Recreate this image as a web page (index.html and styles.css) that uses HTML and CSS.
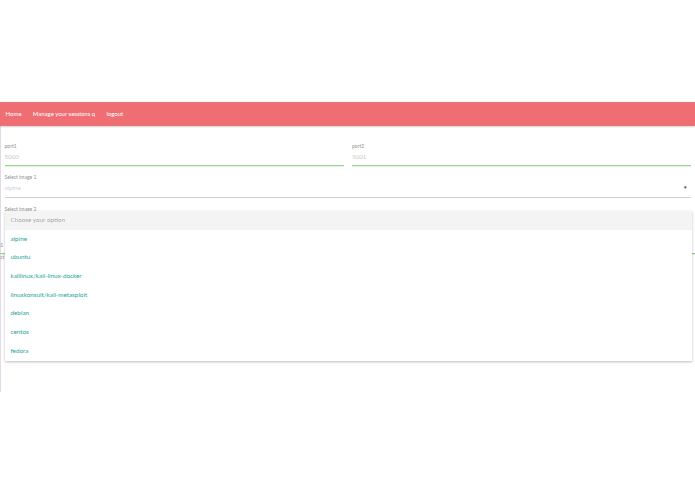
FILE: index.html
```html
<!DOCTYPE html>
<html>
<head>
<meta charset="utf-8">
<link rel="stylesheet" href="styles.css">
</head>
<body>
<div class="top-space"></div>
<div class="page">
  <nav class="nav">
    <a class="nav-link" href="#">Home</a>
    <a class="nav-link" href="#">Manage your sessions q</a>
    <a class="nav-link" href="#">logout</a>
  </nav>
  <div class="form">
    <div class="row">
      <div class="col">
        <div class="field">
          <div class="label">port1</div>
          <div class="input valid">5000</div>
        </div>
      </div>
      <div class="col">
        <div class="field">
          <div class="label">port2</div>
          <div class="input valid">5001</div>
        </div>
      </div>
    </div>
    <div class="row">
      <div class="col full">
        <div class="field select-field">
          <div class="label">Select image 1</div>
          <div class="input select">alpine<span class="caret">&#9662;</span></div>
        </div>
      </div>
    </div>
    <div class="row">
      <div class="col full">
        <div class="field select-field open">
          <div class="label">Select image 2</div>
          <div class="input select">alpine<span class="caret">&#9662;</span></div>
          <ul class="dropdown">
            <li class="opt disabled">Choose your option</li>
            <li class="opt">alpine</li>
            <li class="opt">ubuntu</li>
            <li class="opt">kalilinux/kali-linux-docker</li>
            <li class="opt">linuxkonsult/kali-metasploit</li>
            <li class="opt">debian</li>
            <li class="opt">centos</li>
            <li class="opt">fedora</li>
          </ul>
        </div>
      </div>
    </div>
    <div class="hidden-form">
      <div class="label">port1</div>
      <div class="input valid thin"></div>
      <div class="label">Select image 1</div>
    </div>
  </div>
</div>
</body>
</html>
```
FILE: styles.css
```css
* { box-sizing: border-box; }
html, body { margin: 0; padding: 0; background: #fff; }
body { font-family: Lato, "Open Sans", sans-serif; color: rgba(0,0,0,0.87); }
.top-space { height: 102px; }
.page {
  border-left: 1px solid #e4d9ea;
  min-height: 290px;
}
.nav {
  height: 24px;
  background: #ee6e73;
  display: flex;
  align-items: center;
  padding-left: 0;
  box-shadow: 0 1px 1.5px rgba(0,0,0,0.12), 0 1px 2px rgba(0,0,0,0.06);
  margin-left: -1px;
}
.nav-link {
  color: #fff;
  text-decoration: none;
  font-size: 6px;
  padding: 0 5.6px;
  line-height: 24px;
}
.form { padding-top: 17px; }
.row { display: flex; }
.col { flex: 1; padding: 0 4px 0 3.5px; }
.col + .col { padding-left: 4.5px; padding-right: 4px; }
.field { position: relative; }
.label {
  font-size: 5px;
  line-height: 6px;
  height: 6px;
  color: #8f8f8f;
}
.input {
  height: 17px;
  font-size: 6.2px;
  line-height: 16px;
  color: #c8c8c8;
  border-bottom: 1px solid #c4c4c4;
}
.input.valid {
  border-bottom: 1px solid #92d295;
  box-shadow: 0 0.5px 0 0 #cdeccd;
}
.select-field { margin-top: 8px; }
.select {
  height: 18px;
  line-height: 16px;
  color: #d4d0de;
  position: relative;
  display: flex;
  justify-content: space-between;
  border-bottom: 1px solid #d2d2d2;
}
.caret {
  color: #333;
  font-size: 4.5px;
  margin-right: 4px;
}
.open .select { visibility: hidden; }
.dropdown {
  position: absolute;
  left: 0;
  right: -1px;
  top: 5px;
  margin: 0;
  padding: 0;
  list-style: none;
  background: #fff;
  box-shadow: 0 1px 2px rgba(0,0,0,0.18), 0 1px 3px rgba(0,0,0,0.1);
  z-index: 5;
}
.opt {
  height: 18.7px;
  line-height: 18.7px;
  padding: 0 6px;
  font-size: 6.3px;
  color: #26a69a;
}
.opt.disabled {
  color: rgba(0,0,0,0.38);
  background: #f4f4f4;
}
.hidden-form {
  margin-left: -10px;
  margin-top: 12px;
}
.hidden-form .input.thin { height: 6px; }
```
